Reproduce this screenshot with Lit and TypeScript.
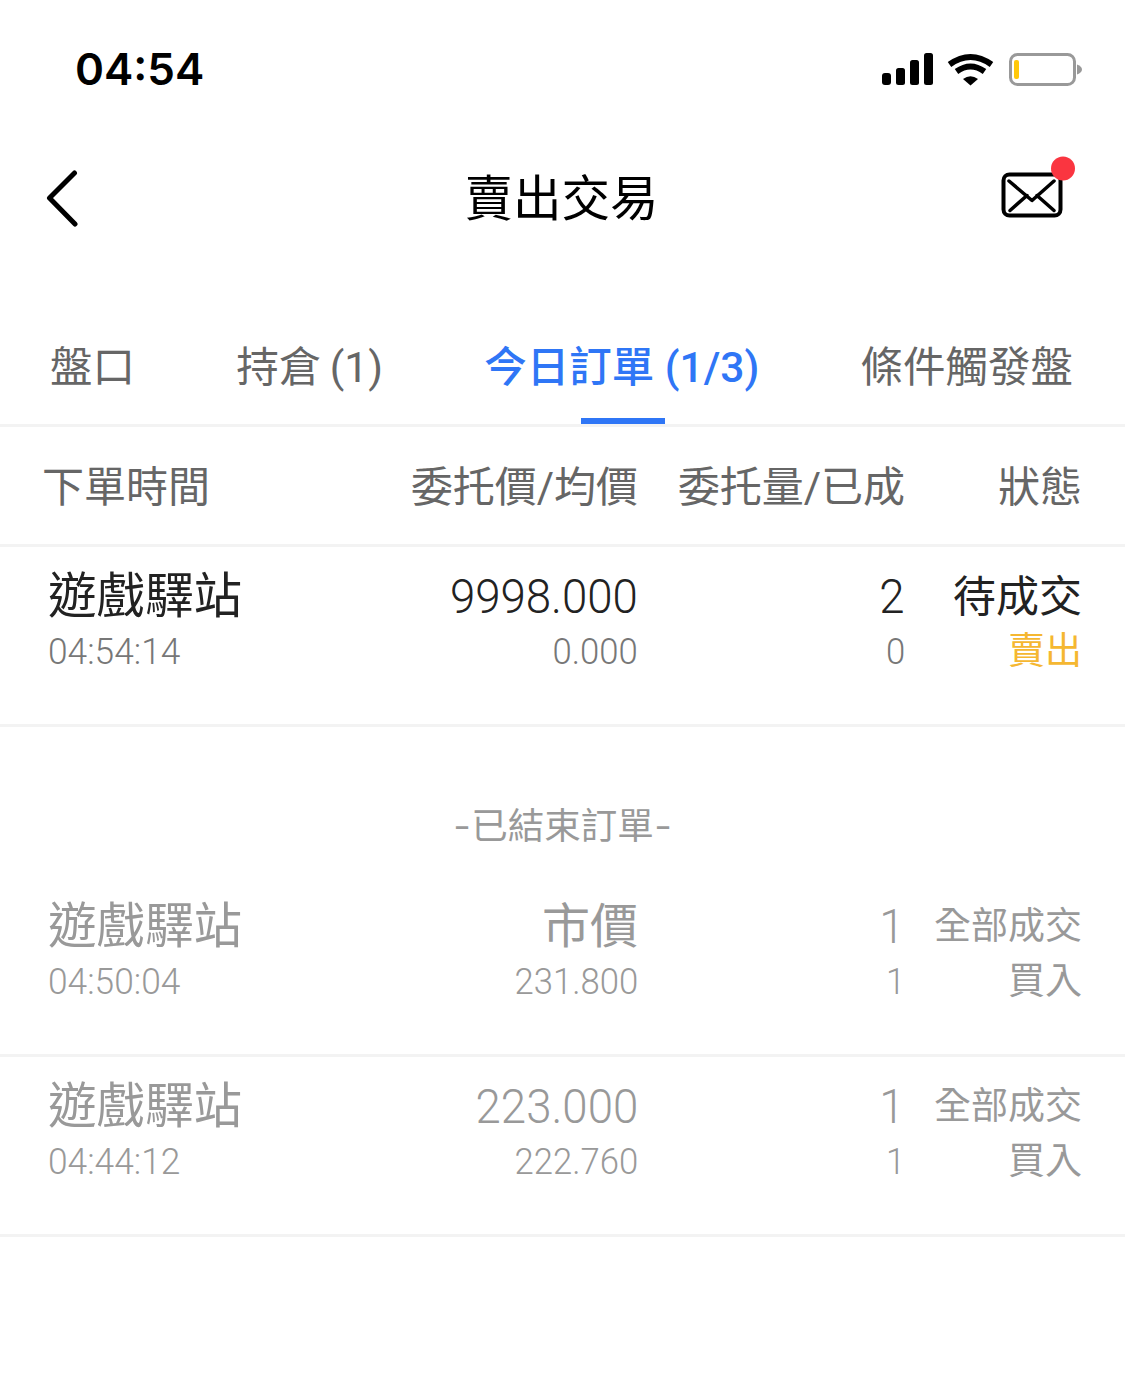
import { LitElement, html, css, svg } from 'lit';
import { customElement, state } from 'lit/decorators.js';

interface Order {
  name: string;
  time: string;
  price: string;
  avg: string;
  qty: string;
  filled: string;
  status: string;
  side: string;
}

const openOrders: Order[] = [
  { name: '遊戲驛站', time: '04:54:14', price: '9998.000', avg: '0.000', qty: '2', filled: '0', status: '待成交', side: '賣出' },
];

const closedOrders: Order[] = [
  { name: '遊戲驛站', time: '04:50:04', price: '市價', avg: '231.800', qty: '1', filled: '1', status: '全部成交', side: '買入' },
  { name: '遊戲驛站', time: '04:44:12', price: '223.000', avg: '222.760', qty: '1', filled: '1', status: '全部成交', side: '買入' },
];

const tabs = ['盤口', '持倉 (1)', '今日訂單 (1/3)', '條件觸發盤'];

const statusIcons = svg`
  <rect x="0" y="20" width="9" height="12" rx="3" fill="#000"/>
  <rect x="14" y="15" width="9" height="17" rx="2.500" fill="#000"/>
  <rect x="28" y="7" width="9" height="25" rx="2.500" fill="#000"/>
  <rect x="42" y="0" width="9" height="32" rx="2.500" fill="#000"/>
  <path d="M67.500 11.500q21-15 42 0M74.500 18.500q14-10 28 0" fill="none" stroke="#000" stroke-width="6"/>
  <path d="M81 26q7.500-5.500 15 0l-7.500 6.500z" fill="#000"/>
  <rect x="128.500" y="1.500" width="64" height="30" rx="7" fill="#fff" stroke="#999" stroke-width="3"/>
  <rect x="132" y="7" width="5" height="19" rx="2" fill="#ffc80a"/>
  <path d="M195 11.500q5 2 5 5t-5 5z" fill="#999"/>
`;

@customElement('app-root')
export class AppRoot extends LitElement {
  static styles = css`
    :host {
      display: block;
      width: 1125px;
      height: 1373px;
      background: #fff;
      font-family: 'Roboto', 'Noto Sans CJK TC', sans-serif;
      overflow: hidden;
    }

    .status {
      height: 132px;
      display: flex;
      justify-content: space-between;
      padding: 0 43px 0 75px;
      align-items: center;
      box-sizing: border-box;
    }

    .clock {
      font: 600 44px/1 'Inter', sans-serif;
      color: #000;
      margin-top: 6px;
    }

    .status svg { display: block; margin-top: 6px; }

    .nav {
      height: 132px;
      display: grid;
      grid-template-columns: 1fr auto 1fr;
      align-items: center;
      padding: 0 62px 0 60px;
    }

    .title {
      font: 400 48.500px/1 'Noto Sans CJK TC', sans-serif;
      color: #000;
      margin-bottom: 6px;
    }

    .back { display: block; margin-left: -14px; }
    .mail { display: block; overflow: visible; justify-self: end; margin-bottom: 7px; }

    .tabs {
      height: 163px;
      box-sizing: border-box;
      display: flex;
      justify-content: space-between;
      padding: 76px 52px 0 50px;
      border-bottom: 3px solid #f3f3f3;
    }

    .tab {
      position: relative;
      height: 84px;
      font-size: 42.500px;
      line-height: 56px;
      color: #666;
      white-space: nowrap;
      word-spacing: -2px;
    }

    .tab.active { color: #2f76f6; font-weight: 500; word-spacing: 0; }

    .tab.active::after {
      content: '';
      position: absolute;
      left: 50%;
      bottom: 0;
      width: 84px;
      height: 6px;
      margin-left: -41px;
      background: #2f76f6;
    }

    .head, .row {
      display: grid;
      grid-template-columns: 300px 290px 267px 177px;
      padding-left: 48px;
      box-sizing: border-box;
      border-bottom: 3px solid #f3f3f3;
    }

    .head {
      height: 120px;
      padding: 0 0 4px 42px;
      grid-template-columns: 306px 290px 267px 177px;
      align-items: center;
      font-size: 42px;
      color: #666;
    }

    .row {
      height: 180px;
      padding-top: 18px;
      align-content: start;
      grid-template-rows: 64px 46px;
      align-items: center;
    }

    .r { text-align: right; }

    .num { display: inline-block; transform: scaleX(0.95); transform-origin: right center; font-weight: 300; }
    .time { transform: scaleX(0.967); transform-origin: left center; }

    .name { font-size: 48.500px; line-height: 64px; color: #222; }
    .main { font-size: 48px; line-height: 64px; color: #222; }
    .state { font-size: 43px; line-height: 64px; color: #222; }
    .sub { font-size: 36.500px; line-height: 46px; color: #777; }
    .side { font-size: 37px; line-height: 46px; color: #f5b731; }

    .closed .name, .closed .main { color: #999; }
    .closed .state { font-size: 37px; color: #999; }
    .closed .sub { color: #999; }
    .closed .side { color: #999; }

    .divider {
      margin: 75px 0 25px;
      text-align: center;
      font-size: 36.500px;
      line-height: 50px;
      color: #999;
    }

    .dash { display: inline-block; transform: scaleX(1.4); margin: 0 4px; }
  `;

  @state() activeTab = 2;

  private renderRow(o: Order) {
    const priceIsNumber = /^\d/.test(o.price);
    return html`
      <div class="row">
        <div class="name">${o.name}</div>
        <div class="main r">${priceIsNumber ? html`<span class="num">${o.price}</span>` : o.price}</div>
        <div class="main r"><span class="num">${o.qty}</span></div>
        <div class="state r">${o.status}</div>
        <div class="sub"><span class="num time">${o.time}</span></div>
        <div class="sub r"><span class="num">${o.avg}</span></div>
        <div class="sub r"><span class="num">${o.filled}</span></div>
        <div class="side r">${o.side}</div>
      </div>
    `;
  }

  render() {
    return html`
      <div class="status">
        <div class="clock">04:54</div>
        <svg width="200" height="33" viewBox="0 0 200 33">${statusIcons}</svg>
      </div>
      <div class="nav">
        <svg class="back" width="34" height="58" viewBox="0 0 34 58" fill="none" stroke="#000" stroke-width="5" stroke-linecap="round" stroke-linejoin="round">
          <path d="M28.500 4L3.500 29 29 55"/>
        </svg>
        <div class="title">賣出交易</div>
        <svg class="mail" width="62" height="46" viewBox="0 0 62 46" fill="none" stroke="#000" stroke-linecap="round" stroke-linejoin="round">
          <rect x="2.500" y="2.500" width="57" height="41" rx="6" stroke-width="4"/>
          <path d="M8 9l23 19.500L53 9M9 38.500l17-15M53 38.500l-17-15" stroke-width="3.500"/>
          <circle cx="62" cy="-3.500" r="12" fill="#fa3540" stroke="none"/>
        </svg>
      </div>
      <div class="tabs">
        ${tabs.map((t, i) => html`<div class="tab ${i === this.activeTab ? 'active' : ''}">${t}</div>`)}
      </div>
      <div class="head">
        <div>下單時間</div>
        <div class="r">委托價/均價</div>
        <div class="r">委托量/已成</div>
        <div class="r">狀態</div>
      </div>
      ${openOrders.map((o) => this.renderRow(o))}
      <div class="divider"><span class="dash">-</span>已結束訂單<span class="dash">-</span></div>
      ${closedOrders.map((o) => html`<div class="closed">${this.renderRow(o)}</div>`)}
    `;
  }
}

declare global {
  interface HTMLElementTagNameMap { 'app-root': AppRoot; }
}
